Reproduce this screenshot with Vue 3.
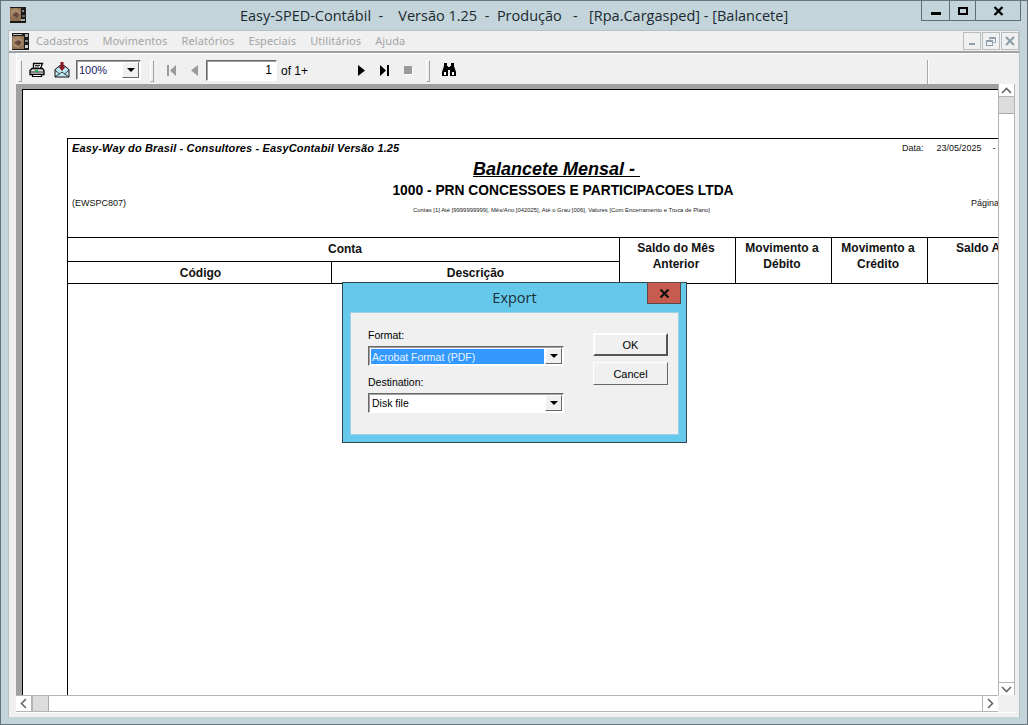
<script setup>
const menus = ['Cadastros', 'Movimentos', 'Relatórios', 'Especiais', 'Utilitários', 'Ajuda']
const title = 'Easy-SPED-Contábil  -    Versão 1.25  -  Produção   -   [Rpa.Cargasped] - [Balancete]'
</script>

<template>
  <div class="win">
    <header class="titlebar">
      <svg class="appicon" width="16" height="16" viewBox="0 0 16 16"><rect width="16" height="16" fill="#1c1a18"/><rect x="0" y="1" width="11" height="13" fill="#8f7054"/><path d="M1 3l5-2 4 3v3l-4 3-5-1z" fill="#a98a6a"/><path d="M2 8l4-3 3 2-2 4z" fill="#66493a"/><rect x="12" y="3" width="2" height="2" fill="#888"/><rect x="12" y="8" width="3" height="2" fill="#666"/><rect x="11" y="12" width="4" height="2" fill="#aaa"/></svg>
      <div class="title">{{ title }}</div>
      <div class="caption">
        <div class="cap cap-min"><span class="glyph-min"></span></div>
        <div class="cap cap-max"><span class="glyph-max"></span></div>
        <div class="cap cap-close">
          <svg width="11" height="10" viewBox="0 0 11 10"><path d="M1.5 1l8 8M9.5 1l-8 8" stroke="#000" stroke-width="2.4" fill="none"/></svg>
        </div>
      </div>
    </header>

    <div class="client">
      <nav class="menubar">
        <svg class="menuicon" width="17" height="17" viewBox="0 0 17 17"><rect width="17" height="17" fill="#1c1a18"/><rect x="0" y="3" width="12" height="13" fill="#8f7054"/><path d="M1 5l5-2 5 3v5l-5 4-5-2z" fill="#a98a6a"/><path d="M2 10l4-3 4 2-3 4z" fill="#66493a"/><rect x="1" y="1" width="9" height="1" fill="#bbb"/><rect x="13" y="1" width="3" height="3" fill="#aaa"/><rect x="13" y="7" width="3" height="2" fill="#888"/><rect x="13" y="12" width="3" height="3" fill="#ccc"/></svg>
        <span v-for="m in menus" :key="m" class="menu">{{ m }}</span>
        <div class="mdi">
          <div class="mdibtn"><span class="mdi-min"></span></div>
          <div class="mdibtn">
            <svg width="10" height="9" viewBox="0 0 10 9" fill="none" stroke="#8ea0ac" stroke-width="1"><path d="M3.5 2.5V.5h6v5h-2"/><path d="M3.5 1.5h6" /><rect x=".5" y="3.5" width="6" height="5"/><path d="M.5 4.5h6"/></svg>
          </div>
          <div class="mdibtn">
            <svg width="10" height="10" viewBox="0 0 10 10"><path d="M1 1l8 8M9 1l-8 8" stroke="#8ea0ac" stroke-width="2.2" fill="none"/></svg>
          </div>
        </div>
      </nav>

      <div class="toolbar">
        <span class="grip"></span>
        <svg class="tb-print" width="16" height="16" viewBox="0 0 16 16"><path d="M4.5 6.5V1.5h9l-2 5" fill="#fff" stroke="#000" stroke-width="1.3"/><path d="M6 3.5h5M6 5h4" stroke="#000" stroke-width=".8"/><path d="M1 8.5 3 6.5h10.5l1.5 2v4H1z" fill="#ddd" stroke="#000" stroke-width="1.3"/><path d="M1 10h14" stroke="#000" stroke-width=".8"/><rect x="6" y="8" width="3" height="2" fill="#1eb050"/><path d="M3.5 12.5h9v2h-9z" fill="#fff" stroke="#000" stroke-width="1.2"/></svg>
        <svg class="tb-mail" width="16" height="16" viewBox="0 0 16 16"><path d="M1 7.5 6 3.5h4l5 4v7.5H1z" fill="#bfe9f5" stroke="#111"/><path d="M1 15 8 10l7 5M1 8l4.5 4M15 8l-4.5 4" fill="none" stroke="#111" stroke-width=".8"/><path d="M6.5 0h3v4.5h2.2L8 9 4.3 4.5h2.2z" fill="#8a1420"/></svg>
        <div class="combo zoomcombo">
          <span class="zoomtext">100%</span>
          <span class="arrowbtn"><i class="tri"></i></span>
        </div>
        <span class="grip grip2"></span>
        <svg class="tb-first" width="9" height="11" viewBox="0 0 9 11"><path d="M0 0h2v11H0z M9 0v11L3 5.5z" fill="#9a9a9a"/></svg>
        <svg class="tb-prev" width="7" height="11" viewBox="0 0 7 11"><path d="M7 0v11L0 5.5z" fill="#9a9a9a"/></svg>
        <div class="pagebox">1</div>
        <span class="of">of 1+</span>
        <svg class="tb-next" width="7" height="11" viewBox="0 0 7 11"><path d="M0 0v11l7-5.5z" fill="#000"/></svg>
        <svg class="tb-last" width="9" height="11" viewBox="0 0 9 11"><path d="M7 0h2v11H7z M0 0v11l6-5.5z" fill="#000"/></svg>
        <span class="tb-stop"></span>
        <span class="grip grip3"></span>
        <svg class="tb-find" width="16" height="15" viewBox="0 0 16 15"><path d="M3 1h3v3h1v1h2V4h1V1h3v3l2 6v4h-6V8H7v6H1v-4l2-6z" fill="#000"/><rect x="3" y="10" width="2" height="3" fill="#fff"/><rect x="11" y="10" width="2" height="3" fill="#fff"/></svg>
        <span class="tb-sep"></span>
      </div>

      <div class="viewer">
        <div class="pagearea">
          <div class="report">
            <div class="rhead">
              <div class="r-line1">
                <span class="company">Easy-Way do Brasil - Consultores - EasyContabil Versão 1.25</span>
                <span class="date"><span>Data:</span><span>23/05/2025</span><span>-</span></span>
              </div>
              <div class="r-title"><u>Balancete Mensal - </u></div>
              <div class="r-org">1000 - PRN CONCESSOES E PARTICIPACOES LTDA</div>
              <div class="r-line4">
                <span class="small">(EWSPC807)</span>
                <span class="filters">Contas [1] Até [9999999999], Mês/Ano [042025], Até o Grau [006], Valores [Com Encerramento e Troca de Plano]</span>
                <span class="small pagina">Página</span>
              </div>
            </div>
            <div class="thead">
              <div class="th conta">Conta</div>
              <div class="th cod">Código</div>
              <div class="th desc">Descrição</div>
              <div class="th tall saldo">Saldo do Mês<br>Anterior</div>
              <div class="th tall deb">Movimento a<br>Débito</div>
              <div class="th tall cred">Movimento a<br>Crédito</div>
              <div class="th tall atual">Saldo Atual</div>
            </div>
          </div>
        </div>
        <div class="vscroll">
          <div class="sbtn sbtn-v"><svg width="11" height="7" viewBox="0 0 11 7"><path d="M1 6l4.5-4.5L10 6" fill="none" stroke="#666" stroke-width="1.6"/></svg></div>
          <div class="thumb thumb-v"></div>
          <div class="vtrack"></div>
          <div class="sbtn sbtn-v"><svg width="11" height="7" viewBox="0 0 11 7"><path d="M1 1l4.5 4.5L10 1" fill="none" stroke="#666" stroke-width="1.6"/></svg></div>
        </div>
        <div class="hscroll">
          <div class="sbtn sbtn-h"><svg width="7" height="11" viewBox="0 0 7 11"><path d="M6 1L1.5 5.5 6 10" fill="none" stroke="#666" stroke-width="1.6"/></svg></div>
          <div class="thumb thumb-h"></div>
          <div class="htrack"></div>
          <div class="sbtn sbtn-h"><svg width="7" height="11" viewBox="0 0 7 11"><path d="M1 1l4.5 4.5L1 10" fill="none" stroke="#666" stroke-width="1.6"/></svg></div>
        </div>
      </div>
    </div>

    <section class="dialog">
      <div class="dlg-title">Export</div>
      <div class="dlg-close"><svg width="11" height="9" viewBox="0 0 11 9"><path d="M1.5 .5l8 8M9.5 .5l-8 8" stroke="#111" stroke-width="2.2" fill="none"/></svg></div>
      <div class="dlg-body">
        <div class="dlg-fields">
          <label class="dlg-label">Format:</label>
          <div class="combo dlgcombo">
            <span class="selected">Acrobat Format (PDF)</span>
            <span class="arrowbtn"><i class="tri"></i></span>
          </div>
          <label class="dlg-label second">Destination:</label>
          <div class="combo dlgcombo">
            <span class="plain">Disk file</span>
            <span class="arrowbtn"><i class="tri"></i></span>
          </div>
        </div>
        <div class="dlg-btns">
          <button class="btn btn-default">OK</button>
          <button class="btn">Cancel</button>
        </div>
      </div>
    </section>
  </div>
</template>

<style>
html, body { margin: 0; padding: 0; overflow: hidden; }
</style>

<style scoped>
.win {
  position: relative;
  width: 1028px;
  height: 725px;
  box-sizing: border-box;
  border: 1px solid #66757c;
  background: #c3d5da;
  display: flex;
  flex-direction: column;
  overflow: hidden;
  font-family: "Noto Sans", "Open Sans", sans-serif;
  color: #000;
}
.titlebar {
  height: 29px;
  flex: none;
  display: flex;
  align-items: flex-start;
  position: relative;
}
.appicon { margin: 6px 0 0 9px; flex: none; }
.title {
  position: absolute;
  left: 239px;
  top: 5px;
  font: 14.5px/20px "Open Sans", sans-serif;
  white-space: pre;
  color: #1b2830;
}
.caption {
  margin-left: auto;
  margin-right: 6px;
  display: flex;
  height: 21px;
  margin-top: -1px;
  border: 1px solid #5f6d74;
  box-sizing: border-box;
}
.cap { display: flex; align-items: center; justify-content: center; height: 100%; position: relative; }
.cap-min { width: 27px; border-right: 1px solid #5f6d74; }
.cap-max { width: 25px; border-right: 1px solid #5f6d74; }
.cap-close { width: 44px; }
.glyph-min { width: 10px; height: 3px; background: #000; margin-top: 6px; }
.glyph-max { width: 6px; height: 4px; border: 2px solid #000; }

.client {
  flex: 1;
  margin: 0 7px 7px 7px;
  display: flex;
  flex-direction: column;
  background: #f0f0f0;
  border: 1px solid #b3c0c5;
  border-bottom: 0;
  min-height: 0;
}
.menubar {
  height: 20px;
  flex: none;
  display: flex;
  align-items: center;
  font: 11px/20px "Noto Sans", sans-serif;
  color: #a5a5a5;
  border-bottom: 2px solid #a0a0a0;
  padding-left: 3px;
}
.menuicon { flex: none; margin-right: 7px; }
.menu { margin-right: 14px; letter-spacing: .1px; }
.mdi { margin-left: auto; display: flex; gap: 1px; }
.mdibtn {
  width: 18px;
  height: 18px;
  box-sizing: border-box;
  border: 1px solid #b7bec0;
  background: #f0f0f0;
  display: flex;
  align-items: center;
  justify-content: center;
}
.mdi-min { width: 6px; height: 2px; background: #8ea0ac; margin-top: 5px; }

.toolbar {
  height: 31px;
  flex: none;
  display: flex;
  align-items: center;
  margin-left: 7px;
  margin-right: 4px;
  background: #f0f0f0;
  border-left: 1px solid #fff;
  border-top: 1px solid #fff;
  position: relative;
  box-sizing: border-box;
}
.grip {
  flex: none;
  width: 2px;
  height: 20px;
  border-left: 1px solid #fff;
  border-top: 1px solid #fff;
  border-right: 1px solid #a0a0a0;
  border-bottom: 1px solid #a0a0a0;
  margin-left: 1px;
  margin-top: 3px;
}
.tb-print { margin-left: 7px; margin-top: 2px; flex: none; }
.tb-mail { margin-left: 9px; margin-top: 2px; flex: none; }
.combo {
  display: flex;
  box-sizing: border-box;
  background: #fff;
  border: 1px solid;
  border-color: #696969 #fff #fff #696969;
  box-shadow: inset 1px 1px 0 #a0a0a0;
  padding: 1px;
  align-items: stretch;
}
.zoomcombo { width: 65px; height: 20px; margin-left: 6px; flex: none; margin-top: 2px; }
.zoomtext { flex: 1; font: 11px/16px "Liberation Sans", sans-serif; color: #202060; padding-left: 1px; }
.arrowbtn {
  width: 17px;
  flex: none;
  background: #f0f0f0;
  box-sizing: border-box;
  border: 1px solid;
  border-color: #fff #696969 #696969 #fff;
  display: flex;
  align-items: center;
  justify-content: center;
}
.tri { width: 0; height: 0; border-left: 4px solid transparent; border-right: 4px solid transparent; border-top: 4px solid #000; }
.grip2 { margin-left: 9px; }
.tb-first { margin-left: 13px; margin-top: 2px; flex: none; }
.tb-prev { margin-left: 15px; margin-top: 2px; flex: none; }
.pagebox {
  width: 71px;
  height: 21px;
  margin-left: 8px;
  margin-top: 2px;
  flex: none;
  box-sizing: border-box;
  background: #fff;
  border: 1px solid;
  border-color: #696969 #fff #fff #696969;
  box-shadow: inset 1px 1px 0 #a0a0a0;
  font: 12px/19px "Liberation Sans", sans-serif;
  text-align: right;
  padding-right: 4px;
}
.of { margin-left: 4px; font: 12px/20px "Liberation Sans", sans-serif; width: 27px; flex: none; white-space: nowrap; margin-top: 4px; }
.tb-next { margin-left: 50px; margin-top: 2px; flex: none; }
.tb-last { margin-left: 15px; margin-top: 2px; flex: none; }
.tb-stop { width: 8px; height: 8px; background: #9a9a9a; margin-left: 15px; margin-top: 2px; flex: none; box-shadow: 1px 1px 0 #fff; }
.grip3 { margin-left: 14px; }
.tb-find { margin-left: 11px; margin-top: 1px; flex: none; }
.tb-sep { position: absolute; left: 910px; top: 6px; bottom: 0; width: 1px; background: #a8a8a8; box-shadow: 1px 0 0 #fff; }

.viewer {
  flex: 1;
  min-height: 0;
  margin: 0 4px 4px 7px;
  display: grid;
  grid-template-columns: 1fr 17px;
  grid-template-rows: 1fr 17px;
  border-bottom: 1px solid #fff;
}
.pagearea {
  background: #fff;
  border-left: 6px solid #a0a0a0;
  border-top: 5px solid #a0a0a0;
  overflow: hidden;
  position: relative;
  min-width: 0;
  min-height: 0;
  box-shadow: inset 1px 1px 0 #000;
  padding: 49px 0 0 45px;
}
.report {
  width: 1000px;
  height: 100%;
  border-left: 1px solid #000;
  font-family: "Liberation Sans", Arial, sans-serif;
}
.rhead {
  height: 99px;
  border-top: 1px solid #000;
  display: flex;
  flex-direction: column;
  position: relative;
  box-sizing: border-box;
}
.r-line1 { display: flex; height: 19px; align-items: flex-start; padding-left: 4px; }
.company { font: italic bold 11px/19px "Liberation Sans", sans-serif; letter-spacing: .14px; width: 830px; white-space: nowrap; }
.date { font: 9px/18px "Liberation Sans", sans-serif; display: flex; gap: 11px; color: #111; }
.date span:first-child { margin-right: 2px; }
.r-title { width: 990px; text-align: center; font: italic bold 18px/21px "Liberation Sans", sans-serif; margin-top: 1px; white-space: pre; }
.r-title u { margin-left: -13px; }
.r-org { width: 990px; text-align: center; font: bold 13.8px/17px "Liberation Sans", sans-serif; margin-top: 2px; }
.r-line4 { position: relative; height: 12px; margin-top: -2px; display: flex; padding-left: 4px; }
.small { font: 9px/12px "Liberation Sans", sans-serif; color: #111; }
.filters { position: absolute; left: 345px; top: 8px; font: 5.9px/10px "Liberation Sans", sans-serif; color: #222; white-space: nowrap; }
.pagina { position: absolute; left: 903px; top: 0; }
.thead {
  display: grid;
  grid-template-columns: 264px 288px 116px 96px 96px 140px;
  grid-template-rows: 24px 22px;
  border-top: 1px solid #000;
  border-bottom: 1px solid #000;
  font: bold 12px/16px "Liberation Sans", sans-serif;
  color: #111;
  height: 45px;
}
.th { box-sizing: border-box; text-align: center; white-space: nowrap; }
.conta { grid-column: 1 / 3; border-bottom: 1px solid #000; border-right: 1px solid #000; line-height: 22px; padding-left: 3px; }
.cod { grid-row: 2; border-right: 1px solid #000; line-height: 22px; padding-left: 2px; }
.desc { grid-row: 2; border-right: 1px solid #000; line-height: 22px; }
.tall { grid-row: 1 / 3; border-right: 1px solid #000; padding: 2px 3px 0 0; }
.atual { text-align: left; padding-left: 28px; border-right: 0; }

.vscroll, .hscroll { background: #fff; display: flex; box-sizing: border-box; }
.vscroll { flex-direction: column; border-left: 1px solid #b4b4b4; border-right: 1px solid #b4b4b4; }
.hscroll { grid-column: 1; border-top: 1px solid #b4b4b4; border-bottom: 1px solid #b4b4b4; }
.sbtn { display: flex; align-items: center; justify-content: center; flex: none; background: #fff; box-sizing: border-box; }
.sbtn-v { height: 13px; border-bottom: 1px solid #b4b4b4; }
.sbtn-h { width: 16px; border-right: 1px solid #b4b4b4; }
.thumb { background: #dcdcdc; flex: none; box-sizing: border-box; }
.thumb-v { height: 17px; border-bottom: 1px solid #a8a8a8; }
.thumb-h { width: 17px; border-left: 1px solid #b4b4b4; border-right: 1px solid #a8a8a8; }
.vtrack, .htrack { flex: 1; }
.hscroll .sbtn-h:last-child { border-right: 0; border-left: 1px solid #b4b4b4; }
.vscroll .sbtn-v:last-child { border-bottom: 0; border-top: 1px solid #b4b4b4; }

.dialog {
  position: absolute;
  left: 341px;
  top: 281px;
  width: 345px;
  height: 161px;
  box-sizing: border-box;
  background: #65c9eb;
  border: 1px solid #34454c;
  padding: 29px 7px 7px 7px;
}
.dlg-title {
  position: absolute;
  left: 0;
  right: 0;
  top: 5px;
  text-align: center;
  font: 14.5px/20px "Open Sans", sans-serif;
  color: #1b2e38;
}
.dlg-close {
  position: absolute;
  right: 5px;
  top: -1px;
  width: 34px;
  height: 22px;
  box-sizing: border-box;
  background: #c75b50;
  border: 1px solid #5b4a48;
  display: flex;
  align-items: center;
  justify-content: center;
}
.dlg-body {
  height: 100%;
  box-sizing: border-box;
  background: #f0f0f0;
  border: 1px solid #9fd0e4;
  display: flex;
  padding: 15px 10px 0 17px;
  font: 10.5px/14px "Liberation Sans", sans-serif;
}
.dlg-fields { width: 196px; display: flex; flex-direction: column; }
.dlg-label { height: 18px; line-height: 14px; }
.second { margin-top: 9px; }
.dlgcombo { width: 196px; height: 20px; flex: none; }
.selected {
  flex: 1;
  background: #3399ff;
  margin: 1px 1px 0;
  font-size: 10.5px;
  line-height: 16px;
  padding-left: 1px;
  color: #e8f3ff;
}
.plain { flex: 1; padding-left: 2px; line-height: 17px; font-size: 10.5px; }
.dlg-btns { margin-left: 29px; display: flex; flex-direction: column; gap: 6px; padding-top: 5px; }
.btn {
  width: 75px;
  height: 23px;
  box-sizing: border-box;
  background: #f0f0f0;
  border: 1px solid;
  border-color: #fff #696969 #696969 #fff;
  font: 11px/14px "Liberation Sans", sans-serif;
  padding: 0;
  color: #000;
}
.btn-default { border: 2px solid; border-color: #fff #555 #555 #fff; }
</style>
